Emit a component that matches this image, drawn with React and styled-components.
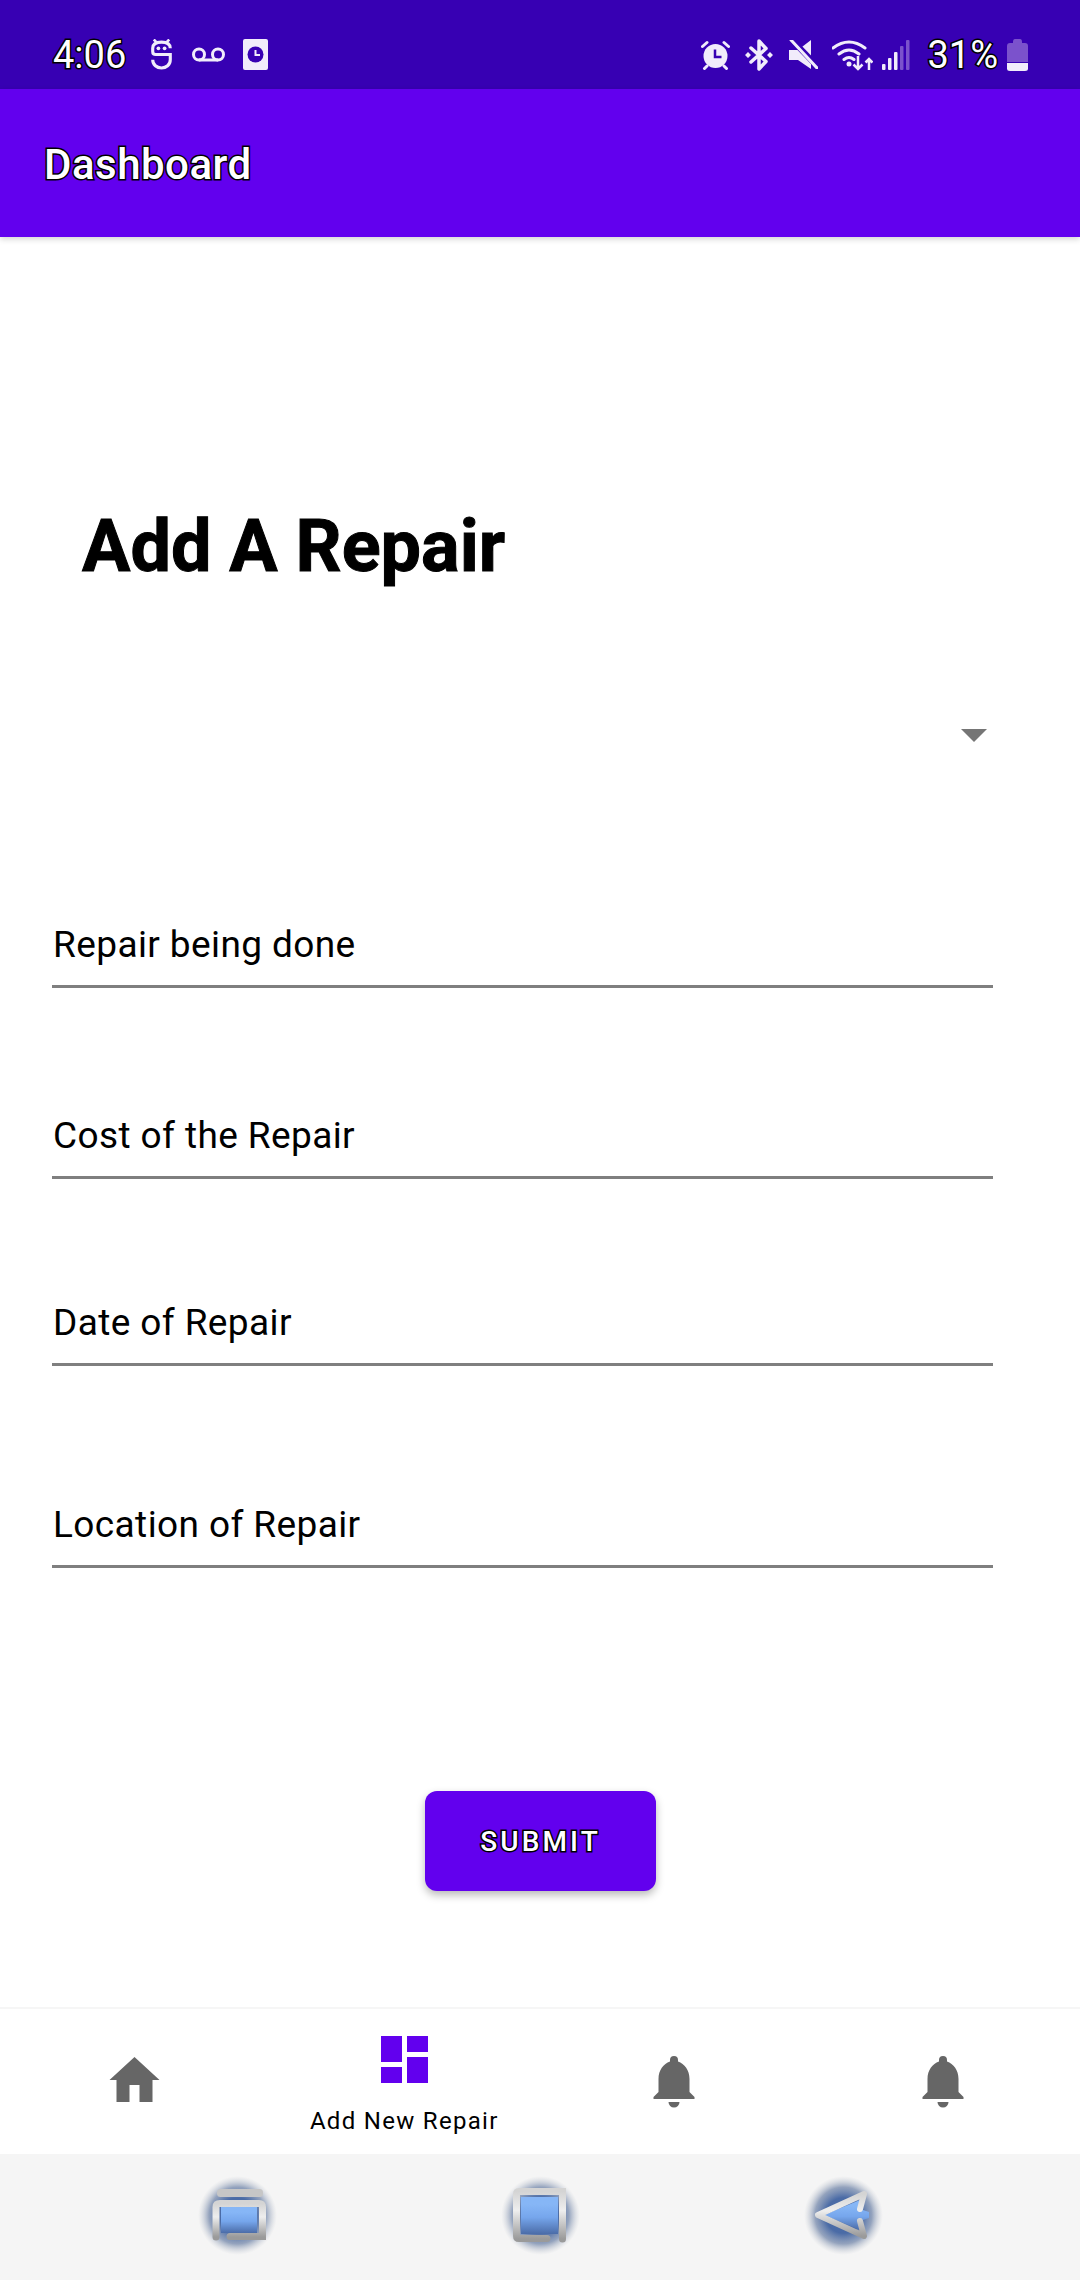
import React from 'react';
import styled, { createGlobalStyle } from 'styled-components';

const GlobalStyle = createGlobalStyle`
	html, body {
		margin: 0;
		padding: 0;
		background: #fff;
		font-family: Roboto, "Noto Sans", sans-serif;
	}
	* {
		box-sizing: border-box;
	}
`;

const PURPLE = '#6200ee';
const DARK_PURPLE = '#3700b3';
const ICON_LIGHT = '#f1ecfb';
const ICON_DIM = '#7b52cc';

const Page = styled.div`
	width: 1080px;
	height: 2280px;
	display: flex;
	flex-direction: column;
	overflow: hidden;
	background: #fff;
`;

const StatusBar = styled.div`
	height: 89px;
	flex: none;
	display: flex;
	align-items: center;
	justify-content: space-between;
	padding: 20px 52px 0 53px;
	background: ${DARK_PURPLE};
`;

const StatusGroup = styled.div`
	display: flex;
	align-items: center;
`;

const StatusText = styled.span`
	font-size: 38px;
	line-height: 1;
	color: #fff;
	-webkit-text-stroke: 3px #000;
	paint-order: stroke fill;
	margin-left: ${p => p.$ml || 0}px;
`;

const StatusIcon = styled.svg`
	display: block;
	flex: none;
	margin-left: ${p => p.$ml || 0}px;
	fill: ${ICON_LIGHT};
	stroke: none;
`;

const AppBar = styled.header`
	position: relative;
	z-index: 1;
	height: 148px;
	flex: none;
	display: flex;
	align-items: center;
	padding: 2px 0 0 44px;
	background: ${PURPLE};
	box-shadow: 0 2px 6px rgba(0, 0, 0, 0.18);
`;

const AppBarTitle = styled.h1`
	margin: 0;
	font-size: 42px;
	font-weight: 500;
	letter-spacing: 0.5px;
	color: #fff;
	-webkit-text-stroke: 3px #000;
	paint-order: stroke fill;
`;

const Main = styled.main`
	flex: 1;
	display: flex;
	flex-direction: column;
	padding-top: 268px;
`;

const Title = styled.h2`
	margin: 0 0 0 82px;
	font-size: 72px;
	line-height: 84px;
	font-weight: 700;
	color: #000;
	-webkit-text-stroke: 1px #000;
`;

const SpinnerRow = styled.div`
	display: flex;
	justify-content: flex-end;
	margin-top: 140px;
	padding-right: 93px;
`;

const SpinnerArrow = styled.div`
	width: 0;
	height: 0;
	border-left: 13px solid transparent;
	border-right: 13px solid transparent;
	border-top: 13px solid #757575;
`;

const Field = styled.div`
	width: 941px;
	margin: ${p => p.$mt}px 0 0 52px;
	padding: 0 0 18px 1px;
	border-bottom: 3px solid #7f7f7f;
	font-size: 37px;
	line-height: 44px;
	letter-spacing: 0.4px;
	color: #000;
`;

const SubmitRow = styled.div`
	margin: 223px 0 0 425px;
`;

const SubmitButton = styled.button`
	width: 231px;
	height: 100px;
	border: none;
	border-radius: 12px;
	background: ${PURPLE};
	color: #fff;
	font-family: inherit;
	font-size: 28px;
	font-weight: 500;
	letter-spacing: 3.1px;
	-webkit-text-stroke: 3px #000;
	paint-order: stroke fill;
	box-shadow: 0 4px 8px rgba(0, 0, 0, 0.28);
`;

const BottomNav = styled.nav`
	height: 147px;
	flex: none;
	display: grid;
	grid-template-columns: repeat(4, 1fr);
	padding-right: 2px;
	background: #fff;
	border-top: 2px solid #f6f6f6;
`;

const NavItem = styled.div`
	display: flex;
	flex-direction: column;
	align-items: center;
	justify-content: ${p => (p.$active ? 'flex-start' : 'center')};
	padding-top: ${p => (p.$active ? 27 : 0)}px;
`;

const NavIcon = styled.svg`
	display: block;
	margin-bottom: ${p => p.$lift || 0}px;
	fill: ${p => (p.$active ? PURPLE : '#666')};
`;

const NavLabel = styled.span`
	margin-top: 24px;
	font-size: 24px;
	line-height: 28px;
	letter-spacing: 1.3px;
	white-space: nowrap;
	color: #000;
`;

const SystemNav = styled.div`
	height: 126px;
	flex: none;
	display: flex;
	align-items: center;
	gap: 224px;
	padding: 0 0 4px 198px;
	background: #f5f5f5;
`;

const SystemIcon = styled.svg`
	display: block;
	flex: none;
`;

const GlossDefs = () => (
	<svg width="0" height="0" style={{ position: 'absolute' }}>
		<defs>
			<radialGradient id="glow">
				<stop offset="0.45" stopColor="#4a6ba6" />
				<stop offset="0.72" stopColor="#7488ab" stopOpacity="0.75" />
				<stop offset="1" stopColor="#c0c5ce" stopOpacity="0" />
			</radialGradient>
			<linearGradient id="glass" x1="0" y1="0" x2="0" y2="1">
				<stop offset="0.2" stopColor="#86b6f6" />
				<stop offset="0.55" stopColor="#76a6ec" />
				<stop offset="1" stopColor="#4b6ca8" />
			</linearGradient>
			<linearGradient id="metal" x1="0" y1="0" x2="0" y2="1">
				<stop offset="0" stopColor="#d4d4d4" />
				<stop offset="0.4" stopColor="#eeeeee" />
				<stop offset="1" stopColor="#9a9a9a" />
			</linearGradient>
		</defs>
	</svg>
);

const RecentsIcon = () => (
	<SystemIcon width="79" height="79" viewBox="0 0 79 79">
		<circle cx="39.5" cy="39.5" r="39.5" fill="url(#glow)" />
		<rect x="23" y="31" width="36" height="26" fill="url(#glass)" />
		<rect x="19" y="13" width="46" height="8" rx="3.5" fill="#c6c6c6" />
		<path d="M18 61V31Q18 27.500 22 27.500H61Q64.500 27.500 64.500 31V60.500H32" fill="none" stroke="url(#metal)" strokeWidth="7" strokeLinecap="round" />
	</SystemIcon>
);

const HomeIcon = () => (
	<SystemIcon width="79" height="79" viewBox="0 0 79 79">
		<circle cx="39.5" cy="39.500" r="39.5" fill="url(#glow)" />
		<rect x="20" y="21" width="37" height="37" fill="url(#glass)" />
		<path d="M46 62.500H18Q15.500 62.500 15.500 60V18Q15.500 15.500 18 15.500H61.500V63" fill="none" stroke="url(#metal)" strokeWidth="7" strokeLinecap="round" />
	</SystemIcon>
);

const BackIcon = () => (
	<SystemIcon width="79" height="79" viewBox="0 0 79 79">
		<circle cx="39.5" cy="39.5" r="39.5" fill="url(#glow)" />
		<polygon points="20,39 56,24 56,33 65,36 65,42 56,45 56,54" fill="url(#glass)" />
		<path d="M56 33L60 18L14 39L60 60L56 45" fill="none" stroke="url(#metal)" strokeWidth="6" strokeLinecap="round" strokeLinejoin="round" />
	</SystemIcon>
);

const Bell = () => (
	<NavIcon width="42" height="52" viewBox="0 0 41 52">
		<path d="M20.500 0a4 4 0 0 1 4 4v1.500C31 8 36 14 36 23V36L41 41V43H0V41L5 36V23C5 14 10 8 16.500 5.500V4a4 4 0 0 1 4-4Z" />
		<path d="M15 46H26a5.500 5.500 0 0 1-11 0Z" />
	</NavIcon>
);

const FIELDS = [
	{ label: 'Repair being done', gap: 181 },
	{ label: 'Cost of the Repair', gap: 126 },
	{ label: 'Date of Repair', gap: 122 },
	{ label: 'Location of Repair', gap: 137 },
];

const App = () => {
	return (
		<Page>
			<GlobalStyle />
			<GlossDefs />
			<StatusBar>
				<StatusGroup>
					<StatusText>4:06</StatusText>
					<StatusIcon $ml={24} width="23" height="31" viewBox="0 0 21 30">
						<path d="M19 9C19 4.500 16 3 10.500 3C5 3 2 4.500 2 9V12C2 14 3 15 5 15H19V20C19 25 15 28 10.500 28C6 28 2 25 2 20" fill="none" stroke={ICON_LIGHT} strokeWidth="3" />
						<path d="M3 0.500L5.500 3M18 0.500L15.500 3" fill="none" stroke={ICON_LIGHT} strokeWidth="2.500" />
						<circle cx="7.500" cy="9" r="1.800" />
						<circle cx="13.500" cy="9" r="1.800" />
					</StatusIcon>
					<StatusIcon $ml={19} width="33" height="15" viewBox="0 0 33 14">
						<circle cx="7" cy="7" r="5.500" fill="none" stroke={ICON_LIGHT} strokeWidth="3" />
						<circle cx="26" cy="7" r="5.500" fill="none" stroke={ICON_LIGHT} strokeWidth="3" />
						<path d="M7 12.500H26" fill="none" stroke={ICON_LIGHT} strokeWidth="3" />
					</StatusIcon>
					<StatusIcon $ml={18} width="25" height="31" viewBox="0 0 25 31">
						<rect width="25" height="31" rx="2" />
						<circle cx="12.500" cy="15.500" r="8" fill={DARK_PURPLE} />
						<path d="M12.500 11V16H17" fill="none" stroke={ICON_LIGHT} strokeWidth="2" />
					</StatusIcon>
				</StatusGroup>
				<StatusGroup>
					<StatusIcon width="29" height="30" viewBox="0 0 29 30">
						<circle cx="14.500" cy="16" r="12" />
						<path d="M1.500 6.500L6 2.500M27.500 6.500L23 2.500M6 26L3.500 28.500M23 26L25.500 28.500" fill="none" stroke={ICON_LIGHT} strokeWidth="3" strokeLinecap="round" />
						<path d="M14 9.500V17H20.500" fill="none" stroke={DARK_PURPLE} strokeWidth="2.5" />
					</StatusIcon>
					<StatusIcon $ml={15} width="28" height="32" viewBox="0 0 28 32">
						<path d="M6 9L21 22.500L14 30V2L21 9.500L6 23" fill="none" stroke={ICON_LIGHT} strokeWidth="3.500" strokeLinejoin="round" strokeLinecap="round" />
						<path d="M0 16L3 13L6 16L3 19ZM22 16L25 13L28 16L25 19Z" />
					</StatusIcon>
					<StatusIcon $ml={16} width="29" height="29" viewBox="0 0 29 29">
						<polygon points="0,10 9,10 22,0 22,29 9,20 0,20" />
						<path d="M2 -1L30 28" fill="none" stroke={DARK_PURPLE} strokeWidth="6" />
						<path d="M2 0L28 28" fill="none" stroke={ICON_LIGHT} strokeWidth="3" strokeLinecap="round" />
					</StatusIcon>
					<StatusIcon $ml={14} width="41" height="32" viewBox="0 0 41 32">
						<path d="M1 9Q17 -3 33 9M7 15Q17 7 27 15M12 20.500Q17 16.500 22 20.500" fill="none" stroke={ICON_LIGHT} strokeWidth="3" strokeLinecap="round" />
						<circle cx="17" cy="25" r="2.500" />
						<path d="M26 17V30M21.500 25.500L26 30L30.500 25.500M37 31V20M33.500 23.500L37 20L40.500 23.500" fill="none" stroke={ICON_LIGHT} strokeWidth="2.500" />
					</StatusIcon>
					<StatusIcon $ml={9} width="28" height="30" viewBox="0 0 28 30">
						<rect x="0" y="24" width="3.500" height="6" rx="1" />
						<rect x="6" y="18" width="3.500" height="12" rx="1" />
						<rect x="12" y="12" width="3.500" height="18" rx="1" />
						<rect x="18" y="6" width="3.500" height="24" rx="1" fill={ICON_DIM} />
						<rect x="24" y="0" width="3.500" height="30" rx="1" fill={ICON_DIM} />
					</StatusIcon>
					<StatusText $ml={17}>31%</StatusText>
					<StatusIcon $ml={9} width="21" height="32" viewBox="0 0 21 32">
						<path d="M6 3Q6 0 8 0H13Q15 0 15 3V4H18Q21 4 21 7V23H0V7Q0 4 3 4H6Z" fill={ICON_DIM} />
						<path d="M0 24H21V29.500Q21 32 18 32H3Q0 32 0 29.500Z" />
					</StatusIcon>
				</StatusGroup>
			</StatusBar>
			<AppBar>
				<AppBarTitle>Dashboard</AppBarTitle>
			</AppBar>
			<Main>
				<Title>Add A Repair</Title>
				<SpinnerRow>
					<SpinnerArrow />
				</SpinnerRow>
				{FIELDS.map(f => (
					<Field key={f.label} $mt={f.gap}>
						{f.label}
					</Field>
				))}
				<SubmitRow>
					<SubmitButton>SUBMIT</SubmitButton>
				</SubmitRow>
			</Main>
			<BottomNav>
				<NavItem>
					<NavIcon $lift={4} width="51" height="45" viewBox="0 0 50 45">
						<path d="M25 0L50 23H43V45H30V28H20V45H7V23H0Z" />
					</NavIcon>
				</NavItem>
				<NavItem $active>
					<NavIcon $active width="47" height="47" viewBox="0 0 47 47">
						<rect x="0" y="0" width="21" height="26" />
						<rect x="26" y="0" width="21" height="16" />
						<rect x="0" y="31" width="21" height="16" />
						<rect x="26" y="21" width="21" height="26" />
					</NavIcon>
					<NavLabel>Add New Repair</NavLabel>
				</NavItem>
				<NavItem>
					<Bell />
				</NavItem>
				<NavItem>
					<Bell />
				</NavItem>
			</BottomNav>
			<SystemNav>
				<RecentsIcon />
				<HomeIcon />
				<BackIcon />
			</SystemNav>
		</Page>
	);
};

export default App;
